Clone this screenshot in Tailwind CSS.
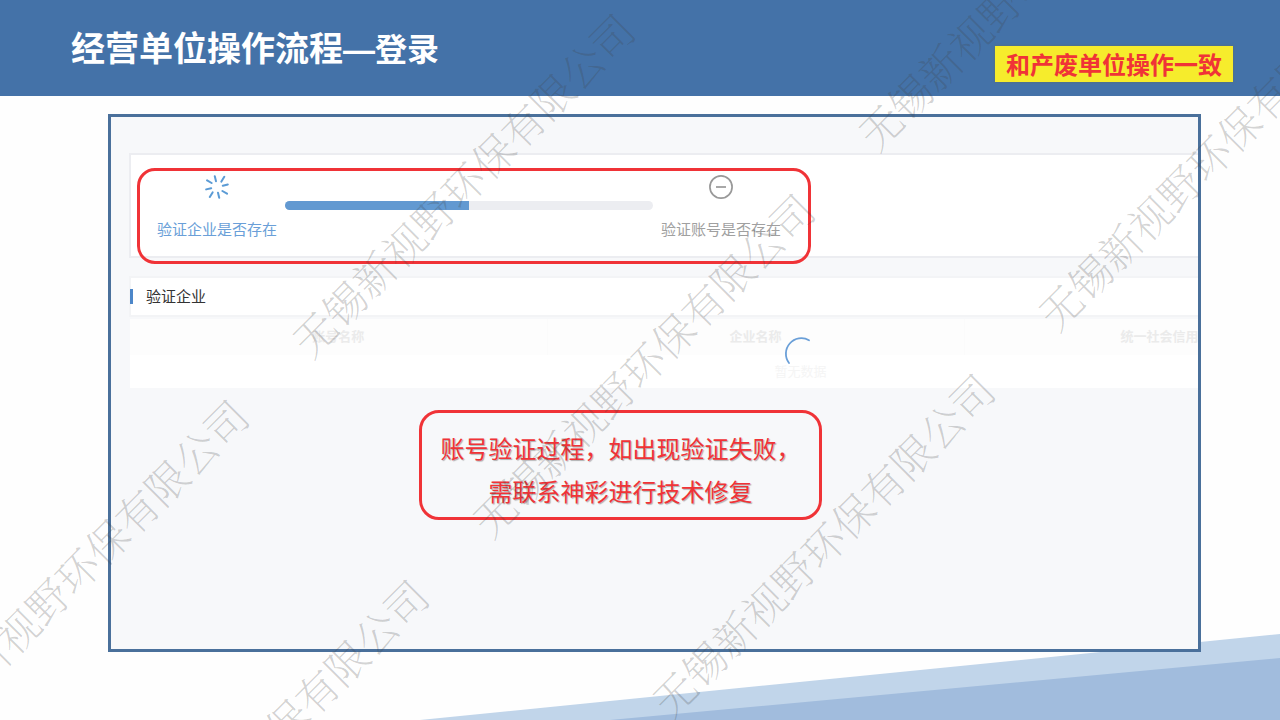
<!DOCTYPE html>
<html lang="zh-CN">
<head>
    <meta charset="UTF-8">
    <meta name="viewport" content="width=device-width, initial-scale=1.0">
    <title>经营单位操作流程—登录</title>
    <script src="https://cdn.jsdelivr.net/npm/@tailwindcss/browser@4"></script>
</head>
<body class="bg-[#fefefe] font-['Noto_Sans_CJK_SC',sans-serif]">
    <div class="relative isolate min-h-screen flex flex-col overflow-hidden">
        <!-- Bottom decoration -->
        <svg class="absolute right-0 bottom-0 -z-10 w-[860px] h-[86px]" viewBox="0 0 860 86" aria-hidden="true">
            <path d="M0 86 860 0V86Z" fill="#c1d5ea"/>
            <path d="M190 86 860 24V86Z" fill="#a1bcdd"/>
        </svg>

        <header class="h-24 bg-[#4472a8] pl-[71px] pr-[47px] flex justify-between items-start">
            <h1 class="mt-[22px] text-[34px] leading-[50px] font-bold text-white whitespace-nowrap">经营单位操作流程<span class="text-[32px]"><span class="font-['Liberation_Sans']">—</span>登录</span></h1>
            <p class="mt-[46px] h-9 px-[11px] bg-[#f6ec2c] text-2xl leading-9 font-bold text-[#f03337] whitespace-nowrap shadow-[0_0_3px_#5c6f70]">和产废单位操作一致</p>
        </header>

        <main class="flex-1 mt-[18px] ml-[108px] mr-[79px] mb-[68px] border-3 border-[#4a709b] bg-[#f7f8fa] overflow-hidden pt-9 pl-[18px]">
            <!-- Steps -->
            <section class="w-[1342px] h-[105px] bg-white border-2 border-[#ecedf1] pt-[13px] pl-[6px]">
                <div class="w-[674px] h-24 border-3 border-[#f03337] rounded-[18px] flex items-start gap-2 pt-1 pl-[17px]">
                    <div class="flex flex-col items-center gap-5 text-[#6a9fd8]">
                        <svg class="size-6" viewBox="0 0 24 24" fill="none" stroke="#5b9bd5" stroke-width="2" stroke-linecap="round" aria-hidden="true">
                            <path d="M9.8 1.2 11 6.2M19.3 1.8 16.4 6.6M22.8 9.5 17.8 10.8M22 18.7 17.4 16M14.2 22.8 13 17.8M4.8 22 7.6 17.4M1.2 14.4 6.2 13.2M2.1 5.3 6.6 8"/>
                        </svg>
                        <span class="text-[15px] leading-5 whitespace-nowrap">验证企业是否存在</span>
                    </div>
                    <div class="w-[368px] h-[9px] mt-[26px] rounded-full bg-[#ecedf1] overflow-hidden" role="progressbar" aria-label="验证进度" aria-valuenow="50" aria-valuemin="0" aria-valuemax="100">
                        <div class="h-full w-1/2 bg-[#6299d1]"></div>
                    </div>
                    <div class="flex flex-col items-center gap-5 text-[#a0a0a0]">
                        <svg class="size-6" viewBox="0 0 24 24" fill="none" stroke="#999" stroke-width="1.7" aria-hidden="true">
                            <circle cx="12" cy="12" r="11.1"/>
                            <path d="M7 12H17"/>
                        </svg>
                        <span class="text-[15px] leading-5 whitespace-nowrap">验证账号是否存在</span>
                    </div>
                </div>
            </section>

            <!-- Company table -->
            <section class="mt-[18px] w-[1342px]">
                <div class="h-[41px] bg-white border-2 border-[#f3f4f6] flex items-center">
                    <span class="w-[3px] h-[15px] -ml-px bg-[#4d87c9]"></span>
                    <h2 class="ml-[13px] pb-[2px] text-[15px] leading-5 text-[#333]">验证企业</h2>
                </div>
                <div class="relative mt-[2px] ml-px">
                    <table class="w-full table-fixed bg-white text-[13px] leading-5">
                        <thead>
                            <tr class="h-9 bg-[#fdfdfd] text-[#ebebeb]">
                                <th class="w-[417px] pb-[2px] font-bold border-r border-[#fbfbfb]">账号名称</th>
                                <th class="w-[417px] pb-[2px] font-bold border-r border-[#fbfbfb]">企业名称</th>
                                <th class="w-[417px] pb-[2px] font-bold border-r border-[#fbfbfb]">统一社会信用代码</th>
                                <th></th>
                            </tr>
                        </thead>
                        <tbody>
                            <tr class="h-[33px] text-[#f5f5f5]">
                                <td colspan="4" class="pb-[2px] text-center">暂无数据</td>
                            </tr>
                        </tbody>
                    </table>
                    <div class="absolute inset-0 flex justify-center items-center">
                        <svg class="size-[34px] overflow-visible" viewBox="0 0 34 34" fill="none" stroke="#6a9fd8" stroke-width="1.8" stroke-linecap="round" aria-label="加载中">
                            <path d="M25 3.2A15.5 15.5 0 0 0 5 26"/>
                        </svg>
                    </div>
                </div>
            </section>

            <p class="mt-[22px] ml-[290px] w-[403px] h-[110px] border-3 border-[#f03337] rounded-[20px] pt-[13px] text-2xl leading-[43px] text-center text-[#f03337] whitespace-nowrap text-shadow-[1px_1px_1px_#0000004d]">账号验证过程，如出现验证失败，<br>需联系神彩进行技术修复</p>
        </main>

        <!-- Watermark -->
        <svg class="absolute inset-0 size-full pointer-events-none font-['Noto_Serif_CJK_SC','Noto_Sans_CJK_SC',serif] font-thin text-[42px]" fill="#404040" fill-opacity="0.24" text-anchor="middle" aria-hidden="true">
            <text transform="translate(465 187) rotate(-45)" y="14">无锡新视野环保有限公司</text>
            <text transform="translate(645 367) rotate(-45)" y="14">无锡新视野环保有限公司</text>
            <text transform="translate(825 547) rotate(-45)" y="14">无锡新视野环保有限公司</text>
            <text transform="translate(79 573) rotate(-45)" y="14">无锡新视野环保有限公司</text>
            <text transform="translate(259 753) rotate(-45)" y="14">无锡新视野环保有限公司</text>
            <text transform="translate(1031 -20) rotate(-45)" y="14">无锡新视野环保有限公司</text>
            <text transform="translate(1211 160) rotate(-45)" y="14">无锡新视野环保有限公司</text>
        </svg>
    </div>
</body>
</html>
